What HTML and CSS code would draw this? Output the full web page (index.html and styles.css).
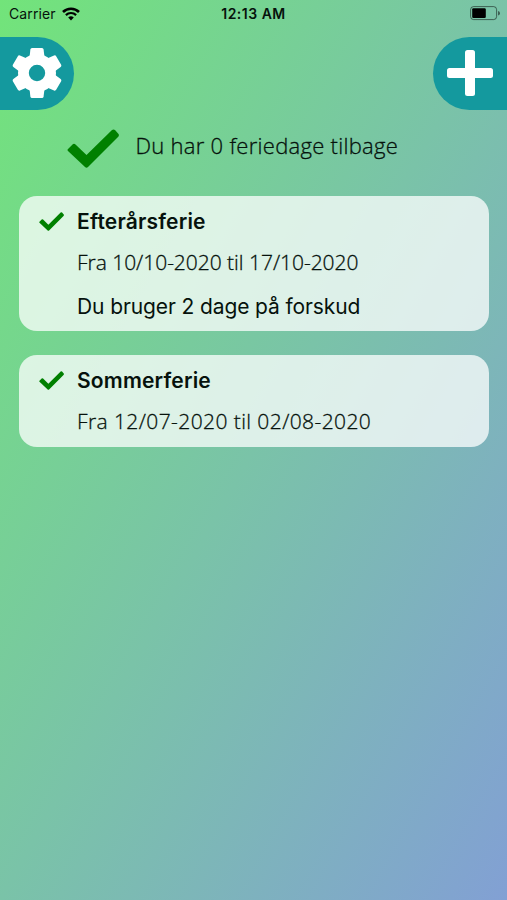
FILE: index.html
```html
<!DOCTYPE html>
<html lang="da">
<head>
  <meta charset="utf-8">
  <title>Feriedage</title>
  <link rel="stylesheet" href="styles.css">
</head>
<body>
  <div class="statusbar">
    <div class="carrier">
      <span class="carrier-name">Carrier</span>
      <svg class="wifi" viewBox="0 0 18 14" width="18" height="14">
        <path d="M1 5 A11.3 11.3 0 0 1 17 5" fill="none" stroke="#000" stroke-width="2.6"/>
        <path d="M3.9 8.1 A7.2 7.2 0 0 1 14.1 8.1" fill="none" stroke="#000" stroke-width="2.2"/>
        <path d="M6.2 10.6 A4 4 0 0 1 11.8 10.6 L9 13.5 Z"/>
      </svg>
    </div>
    <span class="clock">12:13 AM</span>
    <svg class="battery" viewBox="0 0 30 15" width="30" height="15">
      <rect x=".6" y=".6" width="26" height="13" rx="3" fill="none" stroke="#000" stroke-opacity=".5"/>
      <rect x="2.2" y="2.2" width="13.6" height="9.8" rx="1.2"/>
      <path d="M28 5 Q30 5.500 30 7.200 T28 9.500 Z" fill-opacity=".5"/>
    </svg>
  </div>

  <div class="toolbar">
    <button class="tab tab-left" aria-label="Indstillinger">
      <svg viewBox="-25 -25 50 50" width="50" height="50">
        <g fill="#fff">
          <path fill-rule="evenodd" d="M0 -19 A19 19 0 1 1 0 19 A19 19 0 1 1 0 -19 Z M0 -8.200 A8.200 8.200 0 1 0 0 8.200 A8.200 8.200 0 1 0 0 -8.200 Z"/>
          <path id="tooth" d="M-7.500 -16 L-6.600 -23.500 Q-6.400 -25 -5 -25 H5 Q6.400 -25 6.600 -23.500 L7.500 -16 Z"/>
          <use href="#tooth" transform="rotate(60)"/>
          <use href="#tooth" transform="rotate(120)"/>
          <use href="#tooth" transform="rotate(180)"/>
          <use href="#tooth" transform="rotate(240)"/>
          <use href="#tooth" transform="rotate(300)"/>
        </g>
      </svg>
    </button>
    <button class="tab tab-right" aria-label="Tilføj ferie">
      <svg viewBox="0 0 46 46" width="46" height="46" fill="#fff">
        <rect x="18" y="0" width="10" height="46" rx="2.500"/>
        <rect x="0" y="18" width="46" height="10" rx="2.500"/>
      </svg>
    </button>
  </div>

  <div class="summary">
    <svg class="check" viewBox="0 0 52 39" width="52" height="39">
      <path d="M1 20 L5.500 15.500 Q7 14 8.500 15.500 L19.500 26 L45 1 Q46.500 0 48 1 L51.500 5 Q52.500 6.500 51 8 L21 38 Q19.500 39.500 18 38 L1 22 Q0 21 1 20 Z"/>
    </svg>
    <span class="summary-text">Du har 0 feriedage tilbage</span>
  </div>

  <div class="cards">
    <div class="card card-tall">
      <svg class="check" viewBox="0 0 52 39" width="25" height="19">
        <path d="M1 20 L5.500 15.500 Q7 14 8.500 15.500 L19.500 26 L45 1 Q46.500 0 48 1 L51.500 5 Q52.500 6.500 51 8 L21 38 Q19.500 39.500 18 38 L1 22 Q0 21 1 20 Z"/>
      </svg>
      <div class="card-body">
        <h2 class="title">Efterårsferie</h2>
        <p class="dates">Fra 10/10-2020 til 17/10-2020</p>
        <p class="note">Du bruger 2 dage på forskud</p>
      </div>
    </div>
    <div class="card">
      <svg class="check" viewBox="0 0 52 39" width="25" height="19">
        <path d="M1 20 L5.500 15.500 Q7 14 8.500 15.500 L19.500 26 L45 1 Q46.500 0 48 1 L51.500 5 Q52.500 6.500 51 8 L21 38 Q19.500 39.500 18 38 L1 22 Q0 21 1 20 Z"/>
      </svg>
      <div class="card-body">
        <h2 class="title">Sommerferie</h2>
        <p class="dates dates-wide">Fra 12/07-2020 til 02/08-2020</p>
      </div>
    </div>
  </div>
</body>
</html>
```
FILE: styles.css
```css
html, body {
  margin: 0;
  padding: 0;
  height: 100%;
}
body {
  background: linear-gradient(to bottom right, #72e47a, #7ac3a8 50%, #82a0d4);
  font-family: Inter, "Liberation Sans", sans-serif;
  color: #06120c;
  overflow: hidden;
}
.statusbar {
  display: grid;
  grid-template-columns: 1fr auto 1fr;
  align-items: center;
  height: 27px;
  padding: 0 7px 0 9px;
  font-size: 14px;
}
.carrier {
  display: flex;
  align-items: center;
  gap: 6px;
  letter-spacing: .1px;
}
.clock {
  font-weight: 600;
  letter-spacing: .5px;
  margin-right: 2px;
}
.battery {
  justify-self: end;
}
.toolbar {
  display: flex;
  justify-content: space-between;
  padding-top: 9.5px;
}
.tab {
  display: flex;
  align-items: center;
  justify-content: center;
  box-sizing: border-box;
  width: 74px;
  height: 73px;
  padding: 0;
  border: 0;
  background: #14999e;
}
.tab-left {
  border-radius: 0 37px 37px 0;
}
.tab-right {
  border-radius: 37px 0 0 37px;
}
.check {
  fill: #008000;
  flex: none;
}
.summary {
  display: flex;
  align-items: center;
  gap: 17px;
  height: 39px;
  padding: 19.5px 0 0 66.5px;
}
.summary-text {
  font-family: "Open Sans", sans-serif;
  font-weight: 300;
  font-size: 22px;
  line-height: 30px;
  letter-spacing: .28px;
  white-space: nowrap;
  padding-bottom: 8px;
  -webkit-text-stroke: .3px;
}
.cards {
  display: flex;
  flex-direction: column;
  gap: 24.5px;
  padding: 28px 18.5px 0 19px;
}
.card {
  display: flex;
  align-items: flex-start;
  gap: 13px;
  box-sizing: border-box;
  height: 91.5px;
  padding: 11px 20px;
  border-radius: 18px;
  background: rgba(255, 255, 255, .75);
}
.card .check {
  margin-top: 5px;
}
.card-tall {
  height: 134.5px;
}
.title, .dates, .note {
  margin: 0;
  font-size: 21px;
  line-height: 30px;
  white-space: nowrap;
}
.title {
  font-weight: 600;
  letter-spacing: .18px;
}
.dates {
  margin-top: 10px;
  font-family: "Open Sans", sans-serif;
  font-weight: 300;
  letter-spacing: -.03px;
  -webkit-text-stroke: .3px;
}
.dates-wide {
  letter-spacing: .41px;
}
.note {
  margin-top: 15px;
  letter-spacing: -.11px;
}
```
